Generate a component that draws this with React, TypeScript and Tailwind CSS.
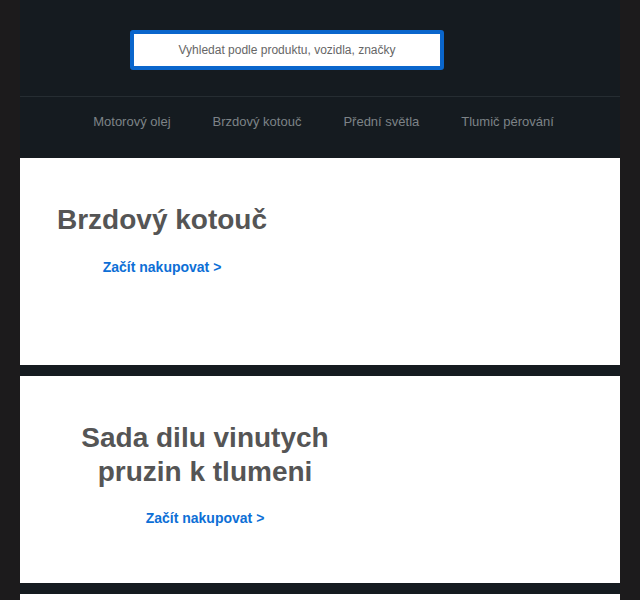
const navItems = ["Motorový olej", "Brzdový kotouč", "Přední světla", "Tlumič pérování"]

const promos = [
  { title: "Brzdový kotouč" },
  { title: "Sada dilu vinutych pruzin k tlumeni" },
  { title: "Motorový olej" },
]

function PromoCard({ title }: { title: string }) {
  return (
    <div className="h-[207px] bg-white pl-[37px] pt-[45px]">
      <div className="w-fit max-w-[296px] text-center">
        <h2 className="text-[28px] font-bold leading-[1.2] text-[#555555]">{title}</h2>
        <a href="#" className="mt-[20px] inline-block text-[14px] font-bold leading-5 text-[#0d6fd6]">
          Začít nakupovat &gt;
        </a>
      </div>
    </div>
  )
}

export default function App() {
  return (
    <div className="min-h-screen bg-[#1c1b1c] px-5 font-['Liberation_Sans',Arial,sans-serif]">
      <div className="flex min-h-screen flex-col bg-[#151b20]">
        <header>
          <div className="border-b border-[#262d32] pb-[26px] pl-[110px] pt-[30px]">
            <div className="flex h-10 w-[314px] items-center justify-center rounded-[3px] border-4 border-[#0a66cc] bg-white">
              <span className="text-[12px] text-[#666666]">Vyhledat podle produktu, vozidla, značky</span>
            </div>
          </div>
          <nav className="flex h-[61px] items-start justify-center gap-[42px] pl-[7px] pt-[15px]">
            {navItems.map((item) => (
              <a key={item} href="#" className="text-[13px] leading-5 text-[#7d8387]">
                {item}
              </a>
            ))}
          </nav>
        </header>
        <div className="flex flex-col gap-[11px]">
          {promos.map((p) => (
            <PromoCard key={p.title} title={p.title} />
          ))}
        </div>
      </div>
    </div>
  )
}
